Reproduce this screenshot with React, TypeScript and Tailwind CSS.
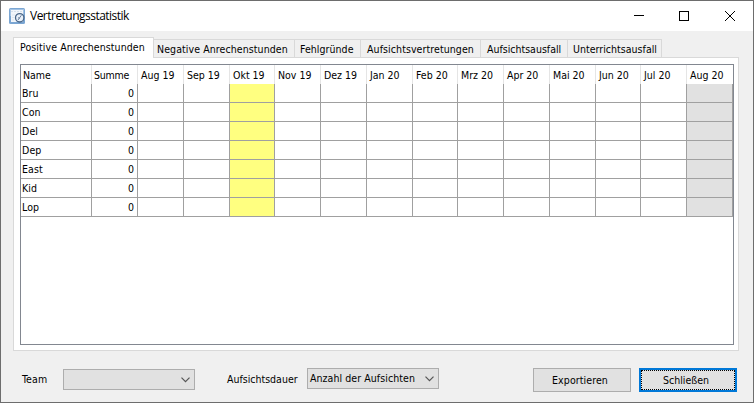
import React from "react";

const months = [
  "Aug 19", "Sep 19", "Okt 19", "Nov 19", "Dez 19", "Jan 20", "Feb 20",
  "Mrz 20", "Apr 20", "Mai 20", "Jun 20", "Jul 20", "Aug 20",
];
const names = ["Bru", "Con", "Del", "Dep", "East", "Kid", "Lop"];
const columns =
  "grid grid-cols-[71px_46px_46px_46px_45px_46px_46px_46px_45px_46px_46px_46px_45px_46px_46px]";

function AppIcon() {
  return (
    <svg width="17" height="16" viewBox="0 0 17 16" className="shrink-0">
      <rect width="16" height="16" rx="1.5" fill="#7ba6d3" />
      <rect x="1" y="1" width="14" height="7" fill="#a3c3e4" />
      <rect x="2" y="2" width="12" height="12" fill="#f1f5fa" />
      <path d="M2 3.5h12" stroke="#d5e0ec" strokeDasharray="2 1" />
      <path d="M3 7h3M3 9.5h2M3 12h2" stroke="#dfe7f0" />
      <circle cx="10.7" cy="9.8" r="4.2" fill="#e8f0f9" stroke="#4a6789" strokeWidth="1.3" />
      <path d="M9 12l3.4-4.8M9.2 9.6l1.5.8" stroke="#6a819f" strokeWidth="1" fill="none" />
    </svg>
  );
}

function Chevron() {
  return (
    <svg width="9" height="6" viewBox="0 0 9 6" className="ml-auto mt-px shrink-0">
      <path d="M.5 .7l4 4 4-4" fill="none" stroke="#555" strokeWidth="1.2" />
    </svg>
  );
}

function Tab({ label, className }: { label: string; className: string }) {
  return (
    <div className={"h-[18px] border-t border-r border-[#d9d9d9] pt-px leading-[17px] " + className}>
      {label}
    </div>
  );
}

export default function App() {
  return (
    <div className="flex h-[403px] w-[754px] flex-col overflow-hidden whitespace-nowrap border border-[#6d6d6d] bg-[#f0f0f0] font-['DejaVu_Sans_Condensed','DejaVu_Sans',sans-serif] text-[10.5px] font-normal text-black [font-stretch:condensed]">
      <header className="flex h-[30px] shrink-0 items-center bg-white pl-2">
        <AppIcon />
        <h1 className="ml-1 font-['Open_Sans',sans-serif] text-[12px] leading-4 tracking-[-0.52px] [font-stretch:normal]">
          Vertretungsstatistik
        </h1>
        <svg width="102" height="12" viewBox="0 0 102 12" className="ml-auto mr-[17px]" fill="none" stroke="#000">
          <path d="M0 5.5h10" />
          <rect x="45.5" y="1.5" width="9" height="9" />
          <path d="M91 1l10 10M101 1l-10 10" />
        </svg>
      </header>

      <main className="flex flex-col px-3 pt-[6px]">
        <nav className="flex items-end">
          <div className="relative z-10 -mb-px h-[21px] w-[141px] border border-b-0 border-[#d9d9d9] bg-white pl-[6px] leading-[19px] tracking-[0.09px]">
            Positive Anrechenstunden
          </div>
          <Tab label="Negative Anrechenstunden" className="w-[141px] pl-[3px] tracking-[0.09px]" />
          <Tab label="Fehlgründe" className="w-[66px] pl-[5px] tracking-[0.06px]" />
          <Tab label="Aufsichtsvertretungen" className="w-[120px] pl-[6px] tracking-[0.09px]" />
          <Tab label="Aufsichtsausfall" className="w-[87px] pl-[6px]" />
          <Tab label="Unterrichtsausfall" className="w-[94px] pl-[5px] tracking-[0.03px]" />
        </nav>
        <section className="h-[294px] w-[726px] border border-[#d9d9d9] bg-white px-[6px] pt-[6px]">
          <div className="h-[281px] w-[714px] border border-[#828790]">
            <div className={columns + " h-[19px] leading-5"}>
              <div className="border-r border-[#e5e5e5] pl-[2px]">Name</div>
              <div className="border-r border-[#e5e5e5] pl-[2px] tracking-[-0.2px]">Summe</div>
              {months.map((m) => (
                <div key={m} className="border-r border-[#e5e5e5] pl-[3px] last:border-white">{m}</div>
              ))}
            </div>
            {names.map((name) => (
              <div key={name} className={columns + " h-[19px] leading-[18px]"}>
                <div className="border-r border-b border-[#a0a0a0] pl-px tracking-[0.1px]">{name}</div>
                <div className="border-r border-b border-[#a0a0a0] pr-[3px] text-right">0</div>
                {months.map((m) => (
                  <div
                    key={m}
                    className={
                      "border-r border-b border-[#a0a0a0] " +
                      (m === "Okt 19" ? "bg-[#ffff80]" : m === "Aug 20" ? "bg-[#e1e1e1]" : "")
                    }
                  />
                ))}
              </div>
            ))}
          </div>
        </section>
      </main>

      <footer className="flex items-start pl-[21px] pt-[17px]">
        <span className="mt-[3px] w-[41px] leading-4 tracking-[0.1px]">Team</span>
        <div className="mt-px flex h-[21px] w-[132px] items-center border border-[#adadad] bg-[#e1e1e1] pr-1">
          <Chevron />
        </div>
        <span className="ml-8 mt-[3px] w-20 leading-4">Aufsichtsdauer</span>
        <div className="flex h-[21px] w-[132px] items-center border border-[#adadad] bg-[#e1e1e1] pl-[2px] pr-1">
          <span className="tracking-[0.07px]">Anzahl der Aufsichten</span>
          <Chevron />
        </div>
        <button className="ml-[94px] h-6 w-[98px] border border-[#adadad] bg-[#e1e1e1] pr-1 leading-[22px] tracking-[0.1px]">
          Exportieren
        </button>
        <button className="ml-2 h-6 w-[98px] border-2 border-[#0078d7] bg-[#e1e1e1]">
          <span className="block h-5 border border-dotted border-black pr-1 leading-[18px]">Schließen</span>
        </button>
      </footer>
    </div>
  );
}
